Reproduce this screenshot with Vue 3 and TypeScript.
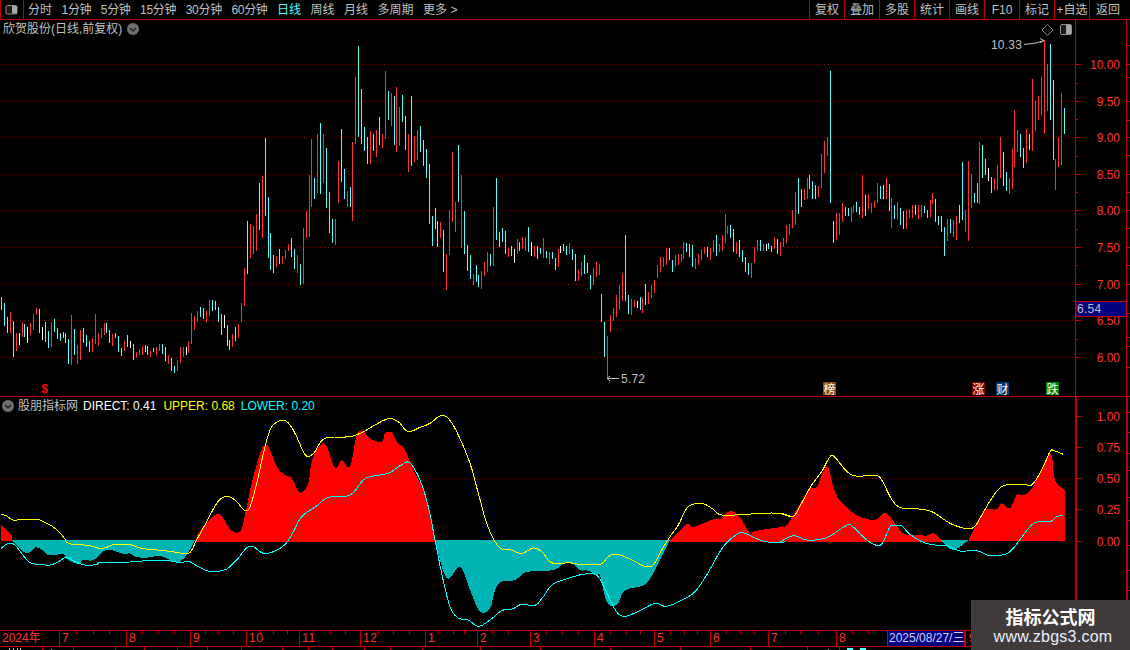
<script setup lang="ts">
type Pt = [number, number]

const navItems = ['分时', '1分钟', '5分钟', '15分钟', '30分钟', '60分钟', '日线', '周线', '月线', '多周期', '更多 >']
const toolItems = ['复权', '叠加', '多股', '统计', '画线', 'F10', '标记', '+自选', '返回']

const barsA = `4,771,810,c 13,789,858,c 22,831,879,c 31,816,879,r 40,843,951,c 49,879,933,r 58,879,915,w 67,846,891,r 73,852,891,c 82,861,909,w 91,849,885,r 100,822,870,r 109,804,825,r 118,807,879,c 127,861,900,w 136,846,906,c 145,873,924,c 154,846,921,r 163,837,876,c 172,864,897,c 181,879,903,c 190,876,894,c 196,879,909,c 205,897,972,c 214,825,975,r 223,867,945,c 232,915,972,r 241,870,960,r 250,864,909,c 259,885,921,c 268,903,936,c 277,894,936,r 286,822,912,r 295,879,918,r 304,864,894,r 313,849,885,r 319,849,879,c 328,870,909,c 337,882,918,r 346,879,894,c 355,888,936,c 364,924,948,c 373,903,933,r 382,885,921,c 391,903,924,w 400,912,960,c 409,936,954,r 418,927,945,r 427,918,945,r 436,915,936,c 442,918,945,c 451,933,951,r 460,924,936,c 469,921,945,r 478,912,933,r 487,912,942,c 496,921,963,c 505,945,972,r 514,954,993,c 523,978,999,c 532,960,993,r 541,921,969,r 550,921,951,r 559,921,945,w 565,903,939,r 574,819,912,r 583,828,870,r 592,813,846,r 601,801,831,c 610,804,837,c 619,813,846,r 628,780,828,r 637,780,813,c 646,783,810,c 655,801,846,c 664,822,885,c 673,825,864,w 682,855,918,c 688,900,930,c 697,882,921,r 706,861,903,c 715,852,894,r 724,789,846,r 733,684,798,r 742,543,702,c 751,552,654,r 760,558,642,r 769,522,633,r 778,429,570,c 787,408,594,r 796,294,528,c 805,471,654,c 811,579,690,c 820,645,699,c 829,648,681,r 838,627,672,c 847,648,672,r 856,630,657,r 865,612,633,r 874,594,651,c 883,627,687,c 892,645,699,r 901,672,735,c 910,564,732,r 919,513,594,r 928,405,591,r 934,297,501,r 943,414,477,c 952,282,459,r 961,249,462,c 970,282,429,r 979,324,504,c 988,456,579,c 997,537,609,c 1006,537,615,r 1015,363,489,r 1024,267,426,c 1033,387,477,c 1042,453,501,r 1051,441,501,c 1057,306,543,r 1066,111,312,r 1075,18,291,c 1084,147,312,c 1093,261,333,c 1102,291,372,c 1111,273,372,r 1120,282,333,c 1129,270,351,r 1138,231,315,c 1147,282,324,r 1156,93,297,r 1165,153,240,c 1174,159,258,r 1183,168,315,c 1189,141,336,r 1198,201,318,r`
const barsB = `7,165,246,c 16,228,330,c 25,282,396,r 34,168,378,c 43,288,366,r 52,270,360,r 61,258,336,c 70,300,378,c 79,327,414,c 88,372,552,c 97,528,618,c 106,504,567,c 112,543,621,c 121,546,594,r 130,570,696,c 139,642,750,r 148,510,645,r 157,336,546,r 166,486,576,r 175,315,486,c 184,405,624,r 193,513,642,c 202,615,693,c 211,645,717,c 220,702,735,r 229,675,726,c 235,705,741,c 244,693,747,r 253,666,708,r 262,636,696,r 271,642,678,c 280,501,678,r 289,414,600,c 298,576,621,c 307,564,606,c 316,573,642,c 325,624,651,r 334,618,648,c 343,627,669,w 352,597,642,r 358,606,633,c 367,591,627,r 376,591,633,r 385,561,636,c 394,606,648,w 403,618,651,r 412,618,657,c 421,624,642,c 430,594,654,r 439,633,654,c 448,636,672,r 457,636,657,c 466,654,690,c 475,627,681,r 481,618,639,w 490,612,633,c 499,618,645,c 508,609,642,r 517,627,660,c 526,642,723,c 535,690,723,r 544,666,708,r 553,645,702,c 562,669,699,c 571,705,747,c 580,684,735,r 589,666,711,r 598,672,705,r 604,762,846,c 613,846,951,c 622,888,1014,r 631,825,876,r 640,804,843,r 649,765,831,r 658,735,810,r 667,699,783,r 676,585,783,c 685,765,822,c 694,777,825,r 703,780,801,r 712,783,804,w 721,771,810,c 727,774,819,r 736,732,795,c 745,756,792,r 754,735,774,r 763,720,759,r 772,675,714,r 781,651,696,r 790,651,681,r 799,624,675,r 808,624,660,c 817,660,696,c 826,645,678,r 835,642,675,r 844,642,666,r 850,606,657,r 859,609,636,c 868,612,651,c 877,615,681,c 886,654,687,r 895,642,675,r 904,627,660,r 913,621,642,r 922,621,651,c 931,624,660,r 940,600,636,r 949,585,648,c 958,612,636,r 967,585,633,r 976,522,609,r 982,558,582,r 991,555,594,c 1000,567,636,c 1009,606,642,r 1018,600,651,c 1027,630,666,c 1036,651,696,c 1045,669,705,c`
const barsC = `4,699,744,r 13,651,699,r 22,630,663,r 31,630,663,c 40,642,663,r 49,642,663,w 55,639,657,c 64,648,666,c 73,621,657,r 82,627,672,c 91,636,678,r 100,624,651,r 109,585,639,r 118,582,615,r 127,540,594,r 136,486,585,r 145,444,552,c 154,477,531,c 163,477,510,r 172,444,507,r 178,435,477,c 187,453,507,c 196,465,507,c 205,468,501,r 214,372,474,r 223,333,429,r 232,321,378,r 241,123,519,c 250,573,639,c 259,549,630,r 268,549,615,r 277,519,576,r 286,531,558,c 295,534,558,c 304,531,576,r 310,525,549,r 319,516,546,c 328,531,555,c 337,435,564,r 346,495,558,c 355,492,537,r 364,519,549,r 373,513,534,r 382,459,519,r 391,468,507,c 400,465,507,c 409,444,507,r 418,462,543,c 424,504,594,r 433,525,567,c 442,516,570,r 451,534,585,c 460,543,597,c 469,540,597,r 478,537,564,r 487,525,564,r 496,525,555,c 505,525,567,r 514,525,561,r 523,528,549,c 532,540,564,c 541,510,561,r 547,489,522,r 556,507,576,c 565,558,585,c 574,558,606,c 583,591,678,c 592,567,633,r 601,567,609,c 610,570,621,r 619,558,630,r 628,525,579,c 637,396,570,c 646,540,606,r 655,393,633,r 664,432,534,r 673,489,519,c 682,459,519,c 688,336,522,r 697,345,444,c 706,387,435,c 715,414,453,w 724,441,489,c 733,444,480,r 742,405,480,r 751,321,444,r 760,366,468,c 769,426,483,c 778,444,492,r 787,357,477,r 793,240,411,r 802,300,366,r 811,312,381,c 820,354,414,c 829,297,399,r 838,312,360,c 847,147,363,r 856,213,303,r 865,198,270,r 874,141,255,r 883,30,312,r 892,102,243,r 901,42,270,c 910,150,390,c 916,387,480,r 925,321,411,r 934,189,405,r 943,234,312,c`

function barPaths(): Record<string, string> {
  const out: Record<string, string> = { r: '', c: '', w: '' }
  const add = (src: string, ox: number, oy: number) => {
    for (const item of src.split(' ')) {
      const [zx, a, b, col] = item.split(',')
      const x = ox + Math.floor(Number(zx) / 3) + 0.5
      const y1 = oy + Math.round(Number(a) / 3)
      const y2 = oy + Math.round(Number(b) / 3)
      out[col] += `M${x} ${y1}V${y2}`
    }
  }
  add(barsA, 0, 40)
  add(barsB, 400, 40)
  add(barsC, 750, 30)
  return out
}
const bars = barPaths()

const priceGrid = [64, 101, 137, 174, 210, 247, 284, 320, 357]
const priceLabels: [string, number][] = [
  ['10.00', 64], ['9.50', 101], ['9.00', 137], ['8.50', 174], ['8.00', 210],
  ['7.50', 247], ['7.00', 284], ['6.50', 320], ['6.00', 357],
]
const minorTicks = [83, 119, 156, 192, 229, 265, 302, 339]
const indLabels: [string, number][] = [['1.00', 416], ['0.75', 447], ['0.50', 478], ['0.25', 509], ['0.00', 541]]
const edgeTicks = [45, 64, 77, 101, 120, 137, 155, 174, 192, 210, 228, 247, 265, 284, 313, 337, 346, 367, 412, 432, 453, 470, 497, 520, 545, 570, 590]

function toPts(src: number[], ox: number): Pt[] {
  const out: Pt[] = []
  for (let i = 0; i < src.length; i += 2) out.push([ox + src[i] / 3, 400 + src[i + 1] / 3])
  return out
}
const str = (pts: Pt[]) => pts.map(p => `${p[0].toFixed(1)},${p[1].toFixed(1)}`).join(' ')

// Catmull-Rom densification so the hand-read curve points read as a smooth line
function smooth(pts: Pt[], steps = 5): Pt[] {
  const out: Pt[] = []
  for (let i = 0; i < pts.length - 1; i++) {
    const p0 = pts[Math.max(0, i - 1)]
    const p1 = pts[i]
    const p2 = pts[i + 1]
    const p3 = pts[Math.min(pts.length - 1, i + 2)]
    for (let s = 0; s < steps; s++) {
      const t = s / steps
      const t2 = t * t
      const t3 = t2 * t
      const f = (a: number, b: number, c: number, d: number) =>
        0.5 * (2 * b + (c - a) * t + (2 * a - 5 * b + 4 * c - d) * t2 + (3 * b - a - 3 * c + d) * t3)
      out.push([f(p0[0], p1[0], p2[0], p3[0]), f(p0[1], p1[1], p2[1], p3[1])])
    }
  }
  out.push(pts[pts.length - 1])
  return out
}

const upper = str(smooth([
  ...toPts([3,343,20,348,40,360,70,358,110,358,135,367,165,385,190,410,205,430,240,434,270,437,300,445,320,442,345,433,390,434,425,445,470,450,510,454,560,461,575,450,590,420,620,365,650,310,670,292,690,291,710,305,735,332,750,320,770,250,795,140,810,90,825,70,850,60,870,75,890,110,910,155,925,170,945,155,975,115,1050,110,1090,95,1130,72,1170,55,1197,67], 0),
  ...toPts([0,70,25,95,60,82,90,70,120,48,145,55,175,105,210,190,235,280,260,370,285,425,305,447,330,449,365,460,400,444,425,455,450,485,475,492,505,488,540,493,600,493,625,470,650,463,690,477,735,499,760,494,785,450,810,410,835,375,860,325,885,311,910,311,940,328,965,345,1040,343,1075,340,1140,340,1175,350], 400),
  ...toPts([0,340,30,349,45,345,70,300,95,255,125,215,150,170,165,172,215,225,285,226,305,240,335,298,360,322,400,325,450,333,480,350,510,370,550,384,580,383,600,355,635,295,670,257,730,253,755,255,785,210,810,155,822,152,850,163], 780),
]))
const lower = str(smooth([
  ...toPts([3,445,25,430,45,435,65,460,90,488,120,493,150,495,175,485,200,472,225,485,260,496,290,493,305,487,390,486,440,482,500,481,540,488,565,484,590,497,620,512,650,514,680,507,710,480,750,438,795,461,850,438,880,395,905,350,950,318,985,292,1050,285,1090,240,1120,228,1165,220,1197,198], 0),
  ...toPts([0,198,28,187,60,240,85,320,105,420,125,520,150,620,175,654,205,660,235,679,270,660,305,632,335,628,365,613,405,616,430,590,455,555,490,540,550,523,595,530,640,620,670,649,720,632,765,610,800,619,850,598,885,575,920,525,970,440,1015,400,1035,400,1085,422,1130,429,1155,425], 400),
  ...toPts([0,427,40,407,80,420,120,418,150,408,200,376,215,377,260,420,290,436,308,428,330,380,345,376,365,378,390,403,430,427,465,435,500,437,540,453,590,452,625,466,665,465,695,450,750,380,775,365,810,365,830,350,850,347], 780),
]))

const base = 541.5
const redArea = (pts: Pt[]) => {
  const s = smooth(pts).map((p): Pt => [p[0], Math.min(p[1], base)])
  return str([[pts[0][0], base], ...s, [pts[pts.length - 1][0], base]])
}
const tealArea = (pts: Pt[]) => str(smooth(pts).map((p): Pt => [p[0], Math.max(p[1], 540)]))

const redAreas = [
  str(toPts([3,375,20,390,36,405,36,424,3,424], 0)),
  redArea([
    ...toPts([585,423,605,385,650,342,670,355,690,388,710,398,725,385,740,320,760,230,795,132,830,200,850,222,875,235,900,278,925,250,935,185,960,135,980,140,1005,205,1025,180,1050,200,1070,105,1090,95,1110,115,1145,127,1155,100,1175,97,1190,125,1197,135], 0),
    ...toPts([0,135,15,150,50,230,75,280,105,423], 400),
  ]),
  redArea([
    ...toPts([810,423,860,372,880,381,940,358,960,357,990,333,1020,352,1050,400,1065,393,1130,383,1165,375], 400),
    ...toPts([0,382,20,375,55,320,90,265,110,262,140,198,160,260,175,295,215,335,240,350,285,360,320,340,370,400,420,405,440,407,460,400,480,415,485,423], 780),
  ]),
  str([
    ...smooth(toPts([565,423,600,350,620,328,650,328,665,310,690,325,710,285,730,285,760,260,810,160,825,240,855,270], 780)),
    [780 + 855 / 3, base],
  ]),
]
const tealAreas = [
  toPts([36,420,70,455,90,457,107,442,130,452,145,465,190,463,200,477,235,492,250,480,280,480,318,450,350,455,370,462,390,460,405,470,440,473,480,468,520,484,535,487,560,465,585,420], 0),
  toPts([105,420,140,535,180,500,210,570,240,635,270,625,285,570,305,545,345,540,380,516,460,510,490,492,515,490,540,510,565,512,590,525,600,525,620,605,650,615,675,572,735,553,765,510,810,420], 400),
  toPts([480,420,520,450,565,420], 780),
].map(tealArea)

const monthStarts: [string, number][] = [
  ['2024年', 0], ['7', 59], ['8', 126], ['9', 190], ['10', 246], ['11', 299], ['12', 360],
  ['1', 425], ['2', 477], ['3', 530], ['4', 594], ['5', 654], ['6', 710], ['7', 768], ['8', 836],
]
const dateEnd = 887
const months = monthStarts.map((m, i) => ({
  label: m[0],
  width: (i + 1 < monthStarts.length ? monthStarts[i + 1][1] : dateEnd) - m[1],
}))
const axisTicks = [76, 93, 109, 142, 158, 174, 205, 218, 233, 260, 273, 287, 313, 330, 345, 378, 393, 409, 438, 453, 464, 492, 508, 546, 562, 578, 610, 626, 640, 670, 684, 697, 726, 740, 754, 785, 800, 818, 852, 868, 873]
const tabSeps = [42, 73, 115, 144, 177, 207, 241, 282, 308, 332, 364, 390, 422, 480, 540, 610, 680, 750, 807, 839]
</script>

<template>
  <div class="screen">
    <header class="topbar">
      <div class="panel-toggle">
        <svg width="14" height="10" viewBox="0 0 14 10">
          <rect x="1" y="0.5" width="11" height="8.5" rx="1.5" fill="#1a1a1a" stroke="#909090" />
          <rect x="7" y="1" width="5" height="7.5" fill="#a8a8a8" />
        </svg>
      </div>
      <nav class="periods">
        <span
          v-for="n in navItems"
          :key="n"
          :class="{ active: n === '日线', numeric: /^\d/.test(n) }"
        >{{ n }}</span>
      </nav>
      <div class="tools">
        <span v-for="t in toolItems" :key="t" class="tool">{{ t }}</span>
      </div>
    </header>

    <div class="body">
      <div class="plots">
        <section class="price">
          <svg class="canvas" viewBox="0 20 1075 376" width="1075" height="376">
            <defs>
              <pattern id="dots" x="0" y="0" width="4" height="1" patternUnits="userSpaceOnUse">
                <rect x="0" y="0" width="1" height="1" fill="#800000" />
              </pattern>
            </defs>
            <rect v-for="y in priceGrid" :key="y" x="0" :y="y" width="1075" height="1" fill="url(#dots)" />
            <g class="crisp">
              <path :d="bars.r" stroke="#ff3232" />
              <path :d="bars.c" stroke="#54ffff" />
              <path :d="bars.w" stroke="#ffffff" />
            </g>
            <text x="991" y="49" class="note">10.33</text>
            <path d="M1024 44.5L1036 43L1044 40.5M1040 38.5L1044 40.5L1040 43" class="note-line" />
            <text x="621" y="383" class="note">5.72</text>
            <path d="M607 378.5H619M610 376L607 378.5L610 381" class="note-line" />
            <path d="M1047.5 24.5L1053 30L1047.5 35.5L1042 30Z" fill="none" stroke="#808080" />
            <rect x="1060.5" y="24.5" width="11" height="10" rx="1.5" fill="#1a1a1a" stroke="#909090" />
            <rect x="1066" y="25" width="5" height="9" fill="#a8a8a8" />
            <text x="41" y="392.5" class="dollar">$</text>
            <g>
              <rect x="823" y="382" width="13" height="13" fill="#8a4a10" />
              <text x="823.5" y="393.5" class="mark">榜</text>
              <rect x="972" y="382" width="13" height="13" fill="#800000" />
              <text x="972.5" y="393.5" class="mark">涨</text>
              <rect x="996" y="382" width="13" height="13" fill="#003a70" />
              <text x="996.5" y="393.5" class="mark">财</text>
              <rect x="1046" y="382" width="13" height="13" fill="#008000" />
              <text x="1046.5" y="393.5" class="mark">跌</text>
            </g>
          </svg>
          <div class="title-line">
            <span>欣贺股份(日线,前复权)</span>
            <svg class="chev" width="12" height="12" viewBox="0 0 12 12">
              <circle cx="6" cy="6" r="6" fill="#707070" />
              <path d="M3 5L6 8L9 5" fill="none" stroke="#1c1c1c" stroke-width="1.3" />
            </svg>
          </div>
        </section>

        <section class="indicator">
          <svg class="canvas" viewBox="0 397 1075 233" width="1075" height="233">
            <rect x="0" y="478" width="1075" height="1" fill="url(#dots)" />
            <rect x="1060" y="541" width="15" height="1" fill="url(#dots)" />
            <g class="crisp">
              <polygon v-for="(p, i) in redAreas" :key="'r' + i" :points="p" fill="#ff0000" />
              <polygon v-for="(p, i) in tealAreas" :key="'t' + i" :points="p" fill="#00b4b4" />
              <polyline :points="upper" fill="none" stroke="#ffff00" />
              <polyline :points="lower" fill="none" stroke="#00ffff" />
            </g>
          </svg>
          <div class="legend">
            <svg class="chev" width="12" height="12" viewBox="0 0 12 12">
              <circle cx="6" cy="6" r="6" fill="#707070" />
              <path d="M3 5L6 8L9 5" fill="none" stroke="#1c1c1c" stroke-width="1.3" />
            </svg>
            <span class="lg-name">股朋指标网</span>
            <span class="lg-direct">DIRECT: 0.41</span>
            <span class="lg-upper">UPPER: 0.68</span>
            <span class="lg-lower">LOWER: 0.20</span>
          </div>
        </section>

        <div class="dates">
          <span
            v-for="(m, i) in months"
            :key="i"
            class="month"
            :style="{ width: m.width + 'px' }"
          >{{ m.label }}</span>
          <span class="cursor-date">2025/08/27/三</span>
          <span class="month month-last">9</span>
          <svg class="date-ticks" viewBox="0 0 1075 3" width="1075" height="3">
            <path v-for="x in axisTicks" :key="x" :d="`M${x + 0.5} 0V3`" stroke="#c00000" />
          </svg>
        </div>

        <svg class="tabs" viewBox="0 647 1075 3" width="1075" height="3">
          <path v-for="x in tabSeps" :key="x" :d="`M${x + 0.5} 647V650`" stroke="#c00000" />
          <path d="M9 648h1v2h-1zM13 648h1v2h-1zM17 648h1v2h-1zM20 648h1v2h-1zM51 649h1v1h-1zM828 649h1v1h-1z" fill="#c0c0c0" />
          <path d="M847 648h6v2h-6zM860 648h6v2h-6z" fill="#54ffff" />
        </svg>
      </div>

      <svg class="axis" viewBox="1075 20 55 630" width="55" height="630">
        <path d="M1075.5 20V397M1126.5 20V397" stroke="#c00000" />
        <path d="M1076 397V650M1127 397V650" stroke="#c00000" stroke-width="2" />
        <path d="M1075 396.5H1130" stroke="#c00000" />
        <path v-for="y in priceGrid" :key="'g' + y" :d="`M1075 ${y + 0.5}H1081`" stroke="#c00000" />
        <path v-for="y in minorTicks" :key="'m' + y" :d="`M1075 ${y + 0.5}H1078`" stroke="#c00000" />
        <path v-for="l in indLabels" :key="'i' + l[1]" :d="`M1076 ${l[1] + 0.5}H1082`" stroke="#c00000" />
        <path v-for="y in edgeTicks" :key="'e' + y" :d="`M1126 ${y + 0.5}H1130`" stroke="#c00000" />
        <text v-for="l in priceLabels" :key="l[0]" x="1120" :y="l[1] + 5" class="ax">{{ l[0] }}</text>
        <text v-for="l in indLabels" :key="l[0]" x="1120" :y="l[1] + 5" class="ax">{{ l[0] }}</text>
        <rect x="1076" y="301.5" width="50" height="15" fill="#000080" stroke="#c00000" />
        <text x="1077" y="313" class="cur">6.54</text>
      </svg>
    </div>

    <aside class="stamp">
      <div class="stamp-name">指标公式网</div>
      <div class="stamp-url">www.zbgs3.com</div>
    </aside>
  </div>
</template>

<style scoped>
.screen {
  position: relative;
  width: 1130px;
  height: 650px;
  overflow: hidden;
  background: #000;
  color: #c0c0c0;
  font-family: "Liberation Sans", "Noto Sans CJK SC", sans-serif;
  font-size: 12px;
  line-height: 14px;
}
.topbar {
  display: flex;
  align-items: stretch;
  height: 20px;
  box-sizing: border-box;
  border-bottom: 1px solid #c00000;
}
.panel-toggle {
  width: 24px;
  box-sizing: border-box;
  border-right: 1px solid #c00000;
  border-left: 1px solid #c00000;
  display: flex;
  align-items: center;
  justify-content: center;
}
.periods {
  display: flex;
  align-items: center;
  gap: 9.5px;
  padding-left: 4px;
  flex: 1;
}
.periods .active { color: #54ffff; }
.periods .numeric { letter-spacing: -0.3px; }
.tools { display: flex; }
.tool {
  width: 35px;
  box-sizing: border-box;
  border-left: 1px solid #c00000;
  display: flex;
  align-items: center;
  justify-content: center;
}
.tool:last-child { width: 41px; padding-right: 4px; }
.body { display: flex; height: 630px; }
.plots { width: 1075px; display: flex; flex-direction: column; }
.price { position: relative; height: 377px; box-sizing: border-box; border-bottom: 1px solid #c00000; }
.indicator { position: relative; height: 234px; box-sizing: border-box; border-bottom: 1px solid #c00000; }
.canvas, .axis, .tabs { display: block; }
.crisp { shape-rendering: crispEdges; }
.title-line {
  position: absolute;
  left: 3px;
  top: 2px;
  display: flex;
  align-items: center;
  gap: 5px;
}
.legend {
  position: absolute;
  left: 2px;
  top: 2px;
  display: flex;
  align-items: center;
}
.lg-name { margin-left: 4px; margin-right: 5px; }
.lg-direct { color: #fff; margin-right: 7px; }
.lg-upper { color: #ffff00; margin-right: 6px; }
.lg-lower { color: #00ffff; }
.note { fill: #c0c0c0; font-size: 12px; font-family: "Liberation Sans", sans-serif; letter-spacing: 0.2px; }
.note-line { fill: none; stroke: #c0c0c0; }
.dollar { fill: #ff0000; font-size: 12px; font-weight: 700; font-family: "Liberation Mono", monospace; }
.mark { fill: #fff; font-size: 12px; font-family: "Noto Sans CJK SC", sans-serif; }
.dates {
  position: relative;
  display: flex;
  align-items: center;
  height: 16px;
  box-sizing: border-box;
  border-bottom: 1px solid #c00000;
  color: #ff3232;
}
.month {
  flex: none;
  box-sizing: border-box;
  border-left: 1px solid #c00000;
  height: 15px;
  padding-left: 2px;
  line-height: 15px;
  letter-spacing: 0.6px;
}
.month:first-child { border-left: 0; letter-spacing: 0; }
.cursor-date {
  flex: none;
  width: 78px;
  height: 15px;
  line-height: 15px;
  box-sizing: border-box;
  background: #000080;
  color: #d0d0ff;
  border-left: 1px solid #c00000;
  border-right: 1px solid #c00000;
  padding-left: 1px;
  white-space: nowrap;
  overflow: hidden;
}
.month-last { width: 40px; padding-left: 3px; }
.date-ticks { position: absolute; left: 0; top: 0; pointer-events: none; }
.ax { fill: #ff3232; font-size: 12px; text-anchor: end; font-family: "Liberation Sans", sans-serif; }
.cur { fill: #c0c0c0; font-size: 12px; font-family: "Liberation Sans", sans-serif; letter-spacing: 0.3px; }
.stamp {
  position: absolute;
  right: 0;
  bottom: 0;
  width: 159px;
  height: 50px;
  background: #403a3a;
  color: #fff;
  display: flex;
  flex-direction: column;
  align-items: center;
}
.stamp-name {
  font-family: "Noto Sans CJK SC", sans-serif;
  font-size: 18px;
  font-weight: 700;
  line-height: 20px;
  margin-top: 6px;
}
.stamp-url {
  font-family: "Liberation Sans", sans-serif;
  font-size: 16px;
  line-height: 18px;
  margin-top: 2px;
  margin-left: 5px;
  color: #e8f0ff;
  letter-spacing: 0.25px;
}
</style>
